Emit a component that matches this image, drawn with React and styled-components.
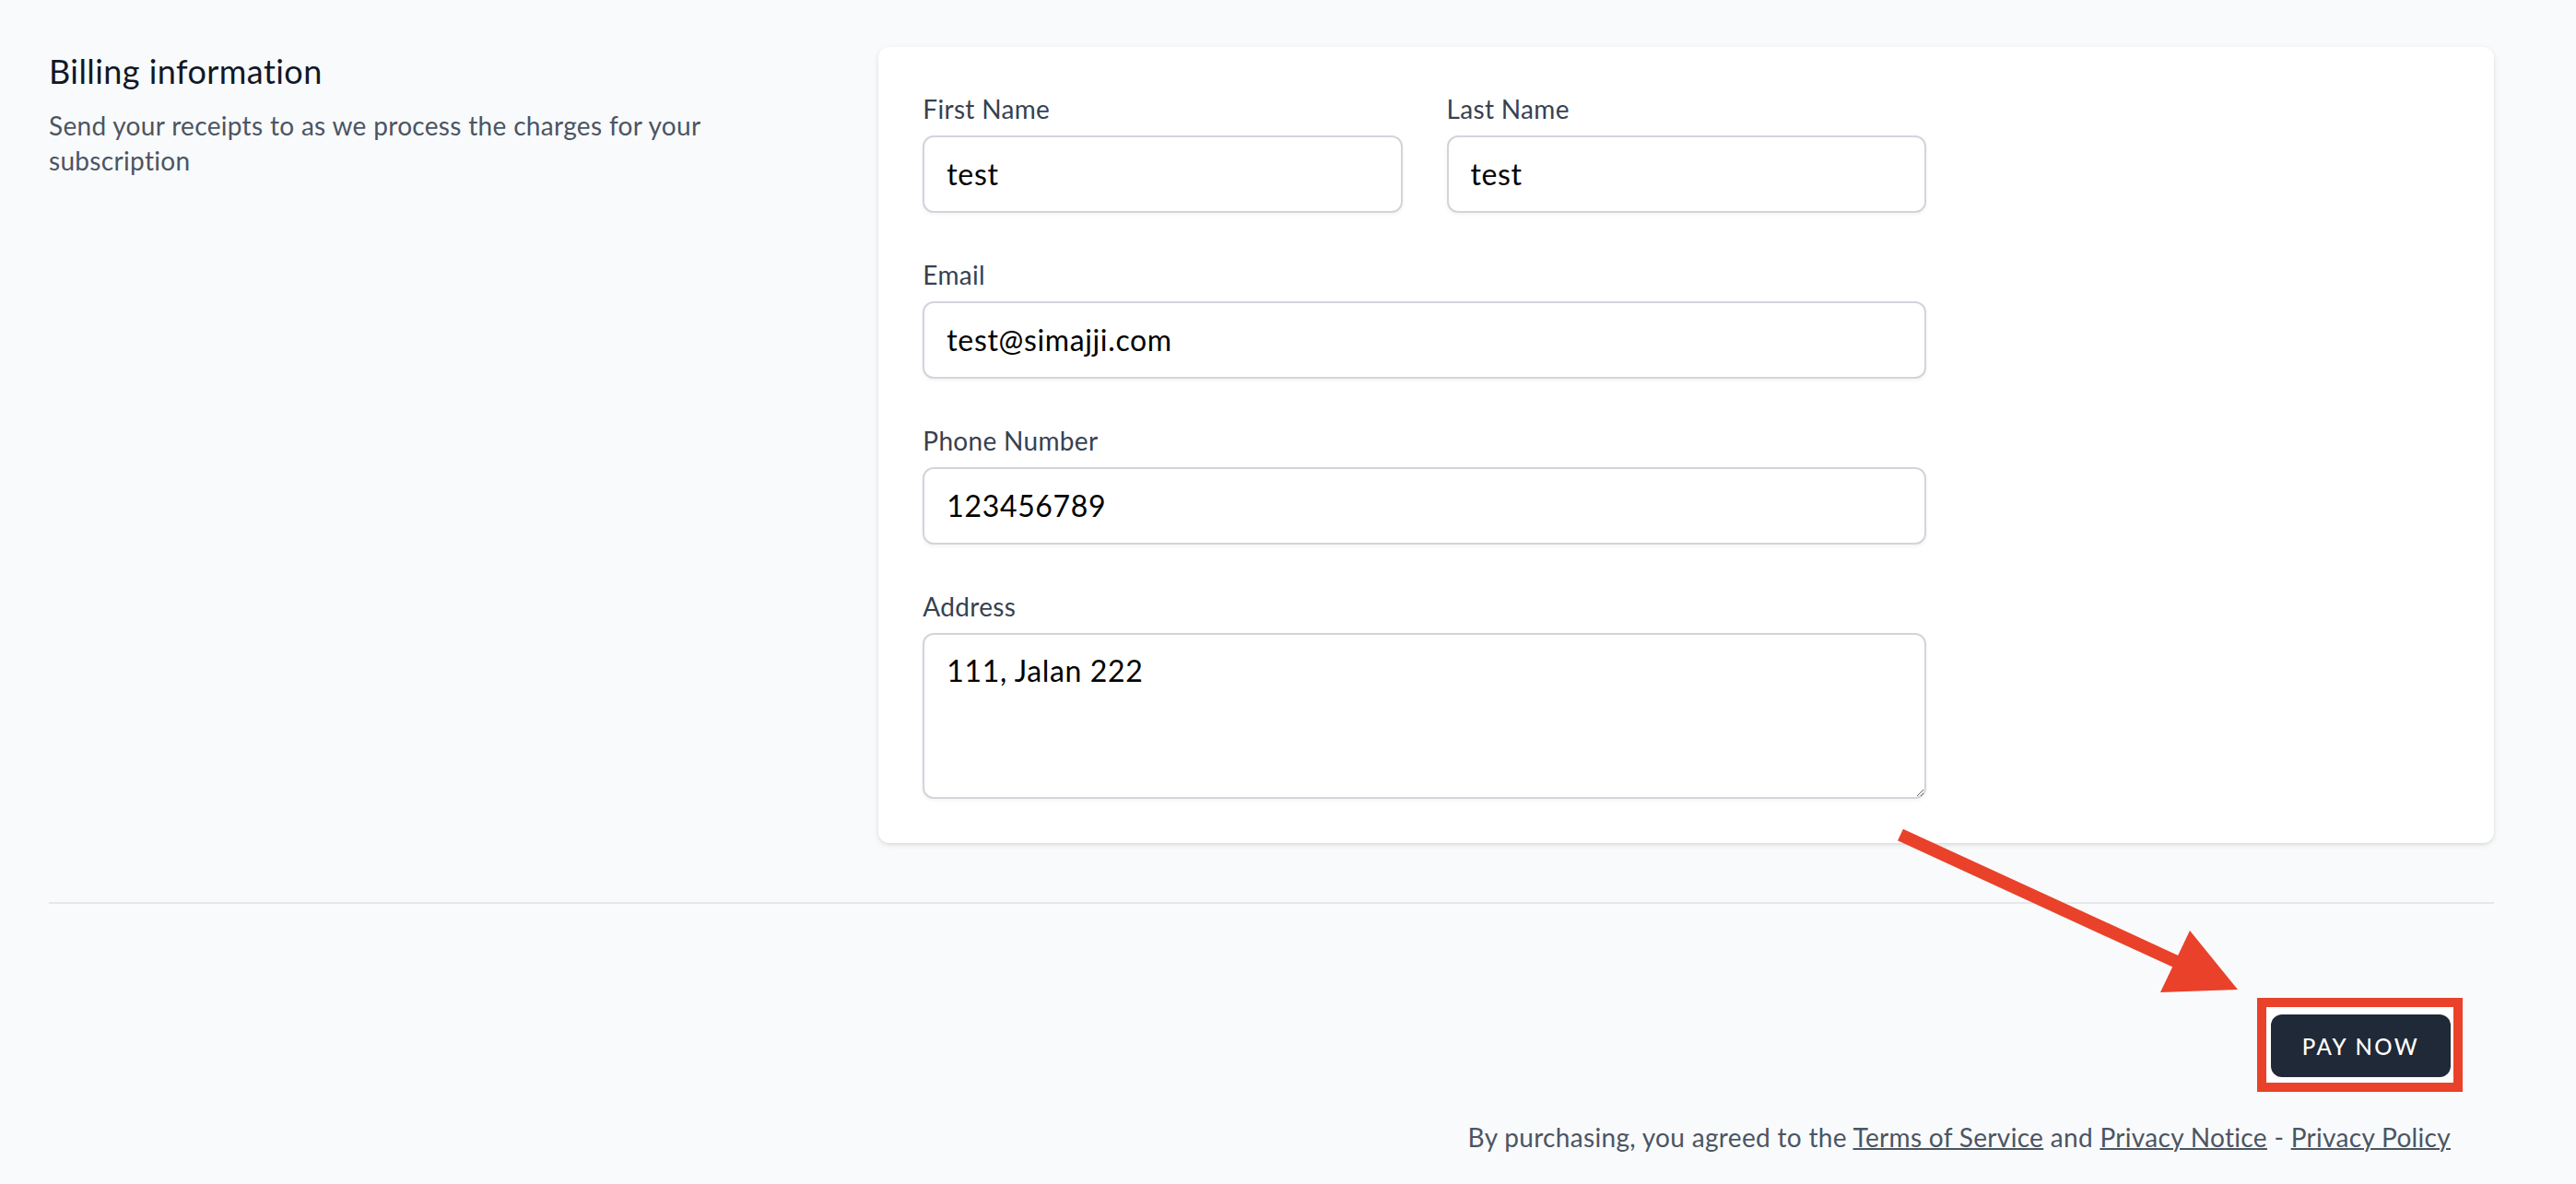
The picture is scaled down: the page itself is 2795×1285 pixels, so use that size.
import React from "react";
import styled, { createGlobalStyle } from "styled-components";

const GlobalStyle = createGlobalStyle`
  html, body {
    margin: 0;
    padding: 0;
    background: #f9fafb;
  }
  body {
    font-family: Lato, "Noto Sans", "Liberation Sans", sans-serif;
    letter-spacing: 0.02em;
    -webkit-font-smoothing: antialiased;
  }
  * { box-sizing: border-box; }
`;

const Page = styled.div`
  position: relative;
  min-height: 1285px;
  padding: 51px 89px 0 53px;
`;

const Section = styled.section`
  display: grid;
  grid-template-columns: repeat(3, 1fr);
  column-gap: 48px;
  align-items: start;
`;

const Intro = styled.div`
  grid-column: span 1;
`;

const Title = styled.h3`
  margin: 0;
  font-size: 36px;
  line-height: 52px;
  font-weight: 400;
  color: #111827;
  letter-spacing: 0.012em;
`;

const Description = styled.p`
  margin: 14px 0 0;
  max-width: 760px;
  font-size: 28px;
  line-height: 38px;
  color: #4b5563;
`;

const Card = styled.div`
  grid-column: span 2;
  background: #ffffff;
  border-radius: 12px;
  padding: 48px;
  box-shadow: 0 2px 6px 0 rgba(0, 0, 0, 0.1), 0 2px 4px -2px rgba(0, 0, 0, 0.1);
`;

const FieldGrid = styled.div`
  display: grid;
  grid-template-columns: repeat(6, 1fr);
  gap: 48px;
`;

const Field = styled.div`
  grid-column: span ${(p) => p.$span};
  min-width: 0;
`;

const Label = styled.label`
  display: block;
  font-size: 28px;
  line-height: 38px;
  padding-bottom: 2px;
  font-weight: 400;
  color: #374151;
`;

const fieldBase = `
  display: block;
  width: 100%;
  margin-top: 8px;
  border: 2px solid #d1d5db;
  border-radius: 12px;
  padding: 15px 24px 17px;
  font-family: Lato, "Noto Sans", "Liberation Sans", sans-serif;
  font-size: 32px;
  line-height: 48px;
  letter-spacing: 0.02em;
  color: #000000;
  background: #ffffff;
  box-shadow: 0 2px 4px 0 rgba(0, 0, 0, 0.05);
  outline: none;
`;

const Input = styled.input`
  ${fieldBase}
  height: 84px;
`;

const TextArea = styled.textarea`
  ${fieldBase}
  height: 180px;
  resize: vertical;
`;

const Divider = styled.hr`
  margin: 64px 0 0;
  border: 0;
  border-top: 2px solid #e5e7eb;
  height: 0;
`;

const Actions = styled.div`
  display: flex;
  flex-direction: column;
  align-items: flex-end;
  padding: 120px 47px 0 0;
`;

const Highlight = styled.div`
  position: relative;
  isolation: isolate;
  &::before {
    content: "";
    position: absolute;
    top: -18px;
    left: -15px;
    right: -13px;
    bottom: -16px;
    border: 10px solid #e9412a;
    background: #ffffff;
    z-index: -1;
  }
`;

const PayButton = styled.button`
  display: inline-flex;
  align-items: center;
  justify-content: center;
  height: 68px;
  padding: 0 32px;
  border: 2px solid transparent;
  border-radius: 12px;
  background: #1f2937;
  color: #ffffff;
  font-family: Lato, "Noto Sans", "Liberation Sans", sans-serif;
  font-size: 24px;
  font-weight: 500;
  letter-spacing: 2.4px;
  text-transform: uppercase;
  cursor: pointer;
`;

const Legal = styled.p`
  margin: 45px 0 0;
  font-size: 28px;
  line-height: 40px;
  color: #4b5563;
  text-align: right;
`;

const LegalLink = styled.a`
  color: #4b5563;
  text-decoration: underline;
  text-decoration-thickness: 2px;
`;

const ArrowLayer = styled.svg`
  position: absolute;
  left: 2040px;
  top: 890px;
  width: 400px;
  height: 200px;
  pointer-events: none;
  overflow: visible;
`;

function Arrow() {
  // coordinates relative to (2040, 890)
  return (
    <ArrowLayer viewBox="0 0 400 200">
      <line x1="22" y1="16" x2="322" y2="154" stroke="#e9412a" strokeWidth="14" />
      <polygon points="336,120 304,187 388,184" fill="#e9412a" />
    </ArrowLayer>
  );
}

export default function App() {
  return (
    <>
      <GlobalStyle />
      <Page>
        <Section>
          <Intro>
            <Title>Billing information</Title>
            <Description>
              Send your receipts to as we process the charges for your subscription
            </Description>
          </Intro>
          <Card>
            <FieldGrid>
              <Field $span={2}>
                <Label htmlFor="first">First Name</Label>
                <Input id="first" defaultValue="test" />
              </Field>
              <Field $span={2}>
                <Label htmlFor="last">Last Name</Label>
                <Input id="last" defaultValue="test" />
              </Field>
              <Field $span={2} />
              <Field $span={4}>
                <Label htmlFor="email">Email</Label>
                <Input id="email" defaultValue="test@simajji.com" />
              </Field>
              <Field $span={2} />
              <Field $span={4}>
                <Label htmlFor="phone">Phone Number</Label>
                <Input id="phone" defaultValue="123456789" />
              </Field>
              <Field $span={2} />
              <Field $span={4}>
                <Label htmlFor="address">Address</Label>
                <TextArea id="address" defaultValue="111, Jalan 222" />
              </Field>
            </FieldGrid>
          </Card>
        </Section>
        <Divider />
        <Actions>
          <Highlight>
            <PayButton type="button">Pay Now</PayButton>
          </Highlight>
          <Legal>
            By purchasing, you agreed to the <LegalLink href="#">Terms of Service</LegalLink> and{" "}
            <LegalLink href="#">Privacy Notice</LegalLink> - <LegalLink href="#">Privacy Policy</LegalLink>
          </Legal>
        </Actions>
        <Arrow />
      </Page>
    </>
  );
}
